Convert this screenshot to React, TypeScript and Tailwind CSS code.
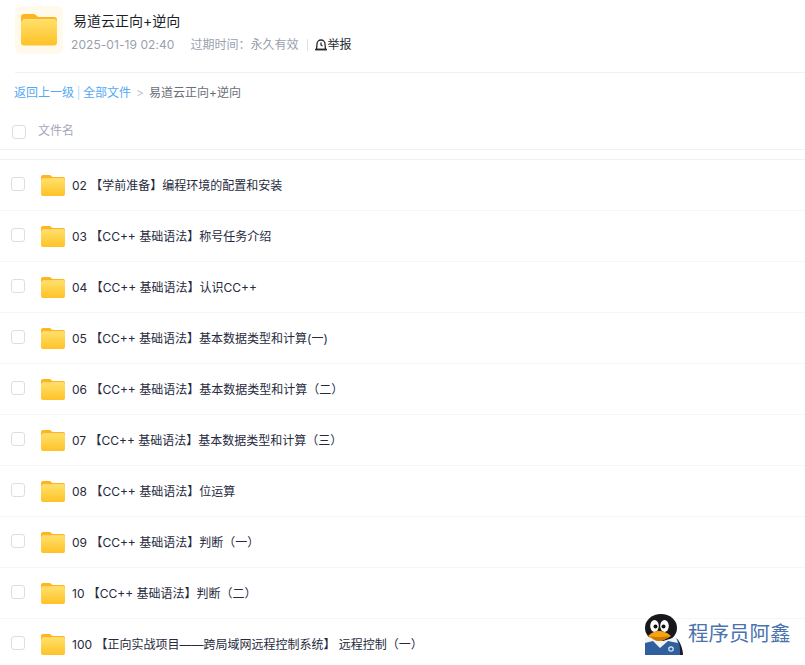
const font = '"Inter", "Noto Sans CJK SC", sans-serif';

function Folder({ size, className }: { size: number; className?: string }) {
  const id = size > 30 ? "a" : "b";
  return (
    <svg width={size} height={size * 0.875} viewBox="0 0 48 42" className={className}>
      <defs>
        <linearGradient id={id + "g"} x1="0" y1="0" x2="0" y2="1">
          <stop offset="0" stopColor="#ffe06a" />
          <stop offset="1" stopColor="#ffc227" />
        </linearGradient>
      </defs>
      <path d="M0 4a4 4 0 0 1 4-4h12c2 0 3 .7 4.500 2l2.500 2h21a4 4 0 0 1 4 4v10H0z" fill="#ffb61e" />
      <path d="M3 7h42v6H3z" fill="#fff3c4" />
      <path d="M0 11a4 4 0 0 1 4-3h11c2 0 3-.3 4.500-.6L22 7h22a4 4 0 0 1 4 4v27a4 4 0 0 1-4 4H4a4 4 0 0 1-4-4z" fill={`url(#${id}g)`} />
    </svg>
  );
}

const rows = [
  ["02", "【学前准备】编程环境的配置和安装"],
  ["03", "【CC++ 基础语法】称号任务介绍"],
  ["04", "【CC++ 基础语法】认识CC++"],
  ["05", "【CC++ 基础语法】基本数据类型和计算(一)"],
  ["06", "【CC++ 基础语法】基本数据类型和计算（二）"],
  ["07", "【CC++ 基础语法】基本数据类型和计算（三）"],
  ["08", "【CC++ 基础语法】位运算"],
  ["09", "【CC++ 基础语法】判断（一）"],
  ["10", "【CC++ 基础语法】判断（二）"],
  ["100", "【正向实战项目——跨局域网远程控制系统】 远程控制（一）"],
];

function Penguin() {
  return (
    <svg width="39" height="41" viewBox="0 0 39 41">
      <path d="M31 24c4 3 7 11 7 17h-6z" fill="#1c1c22" />
      <path d="M0 27c3-2 30-2 33-1 2 4 2 10 2 15H0z" fill="#2f5f9e" />
      <ellipse cx="16" cy="14" rx="16" ry="14" fill="#17171c" />
      <path d="M0 24c0 1 0 5 0 5l8-2 7 7 8-7 10 2-2-6-13 4-14-4z" fill="#f2f2f2" />
      <ellipse cx="9.500" cy="12" rx="4.300" ry="6" fill="#fff" />
      <ellipse cx="19.500" cy="12" rx="4.300" ry="6" fill="#fff" />
      <circle cx="10.500" cy="12.500" r="2" fill="#111" />
      <circle cx="18.500" cy="12.500" r="2" fill="#111" />
      <path d="M3 22c4-4 8-5 11-5s8 1 12 5c-4 2-8 5-12 5s-8-3-11-5z" fill="#f7a30f" />
      <path d="M5 22c5 1.500 13 1.500 19 0-3 3-6 5-10 5s-6-2-9-5z" fill="#c9790a" />
      <circle cx="26" cy="35" r="2.200" fill="none" stroke="#dfe8f3" strokeWidth="1.200" />
    </svg>
  );
}

export default function App() {
  return (
    <div className="relative h-[665px] w-[805px] overflow-hidden bg-white" style={{ fontFamily: font }}>
      <div className="ml-[15px] flex h-[73px] items-start border-b border-[#f1f2f4] pt-[6px]">
        <div className="flex h-[48px] w-[48px] items-center justify-center rounded-md bg-[#fffaeb]">
          <Folder size={36} />
        </div>
        <div className="ml-[8px] pt-[6px]">
          <div className="ml-[2px] text-[14px] leading-[18px] text-[#1c1f2b]">易道云正向+逆向</div>
          <div className="mt-[7px] flex items-center text-[12px] leading-[16px] text-[#9a9fae]">
            <span className="tracking-[0.07px]">2025-01-19 02:40</span>
            <span className="ml-[16px]">过期时间：永久有效</span>
            <span className="ml-[8px] h-[12px] w-px bg-[#dfe1e6]" />
            <svg width="14" height="14" viewBox="0 0 14 14" className="ml-[6px]" fill="none" stroke="#26282f" strokeWidth="1.300">
              <path d="M2.500 11.500 3 6a4 4 0 0 1 8 0l.5 5.500z" />
              <path d="M1 11.500h12M7 4.500V7l1.500 1" />
            </svg>
            <span className="text-[#26282f]">举报</span>
          </div>
        </div>
      </div>

      <div className="flex h-[39px] items-center pl-[14px] pt-[1px] text-[12px] leading-[16px]">
        <span className="text-[#52a9f5]">返回上一级</span>
        <span className="mx-[2.500px] text-[#b9dcf8]">|</span>
        <span className="text-[#52a9f5]">全部文件</span>
        <span className="ml-[5px] mr-[5px] text-[#c4c7cf]">&gt;</span>
        <span className="text-[#6a6e78]">易道云正向+逆向</span>
      </div>

      <div className="flex h-[38px] items-center border-b border-[#f1f2f4] pl-[12px]">
        <span className="mt-[2px] h-[14px] w-[14px] rounded-[3px] border border-[#dcdee2] bg-white" />
        <span className="ml-[12px] text-[12px] leading-[16px] text-[#a3a8ba]">文件名</span>
      </div>

      <div className="h-[10px] border-b border-[#f1f2f4]" />

      {rows.map(([n, t]) => (
        <div key={n} className="flex h-[51px] items-center border-b border-[#f5f6f7] pl-[11px] pt-[1px]">
          <span className="-mt-[3px] h-[14px] w-[14px] rounded-[3px] border border-[#dcdee2] bg-white" />
          <Folder size={24} className="ml-[16px]" />
          <span className="ml-[7px] whitespace-pre text-[12px] leading-[16px] text-[#262a3d]">
            {n} {t}
          </span>
        </div>
      ))}

      <div className="absolute bottom-[10px] left-[645px] flex items-center">
        <Penguin />
        <span className="mb-[2px] ml-[4px] text-[20.500px] leading-[28px] text-[#4a73ad]">程序员阿鑫</span>
      </div>
    </div>
  );
}
